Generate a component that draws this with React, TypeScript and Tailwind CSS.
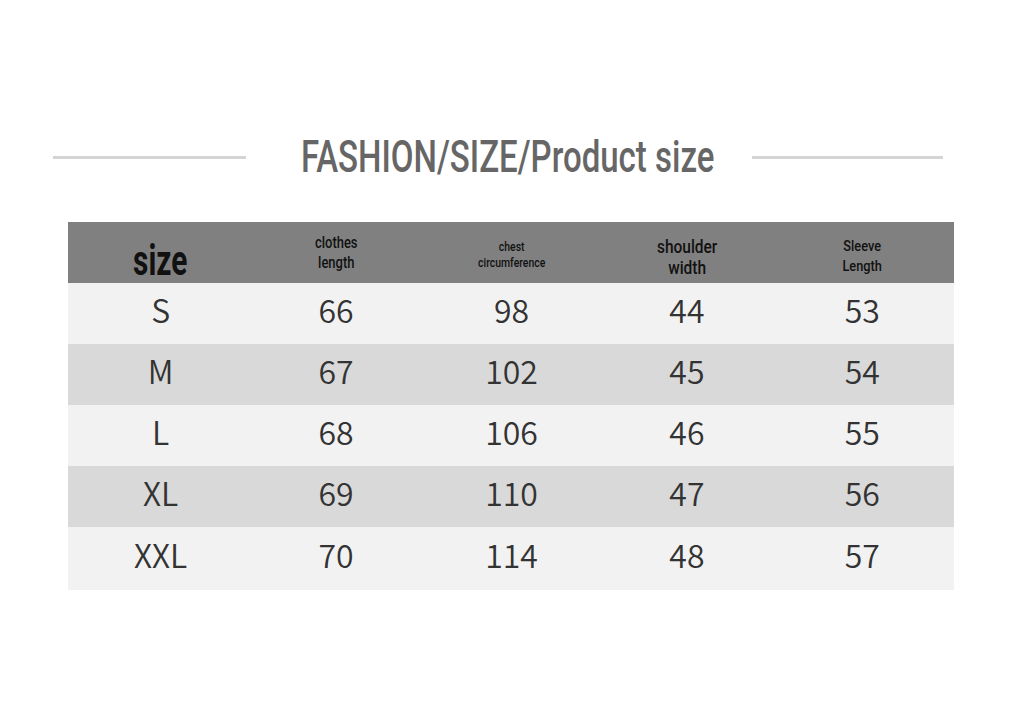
import React from "react";

const rows = [
  ["S", "66", "98", "44", "53"],
  ["M", "67", "102", "45", "54"],
  ["L", "68", "106", "46", "55"],
  ["XL", "69", "110", "47", "56"],
  ["XXL", "70", "114", "48", "57"],
];

export default function App() {
  return (
    <div className="w-[1021px] h-[715px] bg-white flex flex-col overflow-hidden" style={{ fontFamily: "Roboto, 'Noto Sans', sans-serif" }}>
      <div className="mt-[127px] h-[60px] flex items-center">
        <div className="ml-[53px] w-[193px] h-[3px] bg-[#d4d4d4]" />
        <div className="flex-1 flex justify-center">
          <div className="ml-[18px] w-[416px] flex justify-center">
            <span className="shrink-0 whitespace-nowrap inline-block scale-x-[0.75] text-[44px] leading-none font-medium text-[#666666]" style={{ fontFamily: "Roboto, sans-serif" }}>
              FASHION/SIZE/Product size
            </span>
          </div>
        </div>
        <div className="mr-[78px] w-[191px] h-[3px] bg-[#d4d4d4]" />
      </div>

      <div className="mt-[35px] ml-[68px] w-[886px] flex flex-col">
        <div className="h-[61px] bg-[#808080] grid grid-cols-5 pl-[5px] pr-[4px] text-[#111111]">
          <div className="flex justify-center pt-[18px]">
            <span className="inline-block scale-x-[0.71] text-[42px] leading-none font-bold">size</span>
          </div>
          <div className="flex justify-center pt-[11px]">
            <span className="inline-block scale-x-[0.81] text-[16px] leading-[20px] font-medium text-center">clothes<br />length</span>
          </div>
          <div className="flex justify-center pt-[17px]">
            <span className="inline-block scale-x-[0.87] text-[12px] leading-[16px] font-medium text-center">chest<br />circumference</span>
          </div>
          <div className="flex justify-center pt-[14px]">
            <span className="inline-block scale-x-[0.86] text-[18px] leading-[21px] font-medium text-center">shoulder<br />width</span>
          </div>
          <div className="flex justify-center pt-[14px]">
            <span className="inline-block scale-x-[0.85] text-[15px] leading-[20px] font-medium text-center">Sleeve<br />Length</span>
          </div>
        </div>
        {rows.map((r, i) => (
          <div
            key={r[0]}
            className={`${i % 2 === 0 ? "bg-[#f2f2f2]" : "bg-[#d9d9d9]"} ${i === 4 ? "h-[63px]" : "h-[61px]"} grid grid-cols-5 pl-[5px] pr-[4px] text-[#333333]`}
          >
            {r.map((c, j) => (
              <div key={j} className="flex items-center justify-center pb-[9px]">
                <span className="text-[32px] leading-none font-[350]" style={{ fontFamily: "'Noto Sans CJK SC', 'Noto Sans', sans-serif" }}>{c}</span>
              </div>
            ))}
          </div>
        ))}
      </div>
    </div>
  );
}
